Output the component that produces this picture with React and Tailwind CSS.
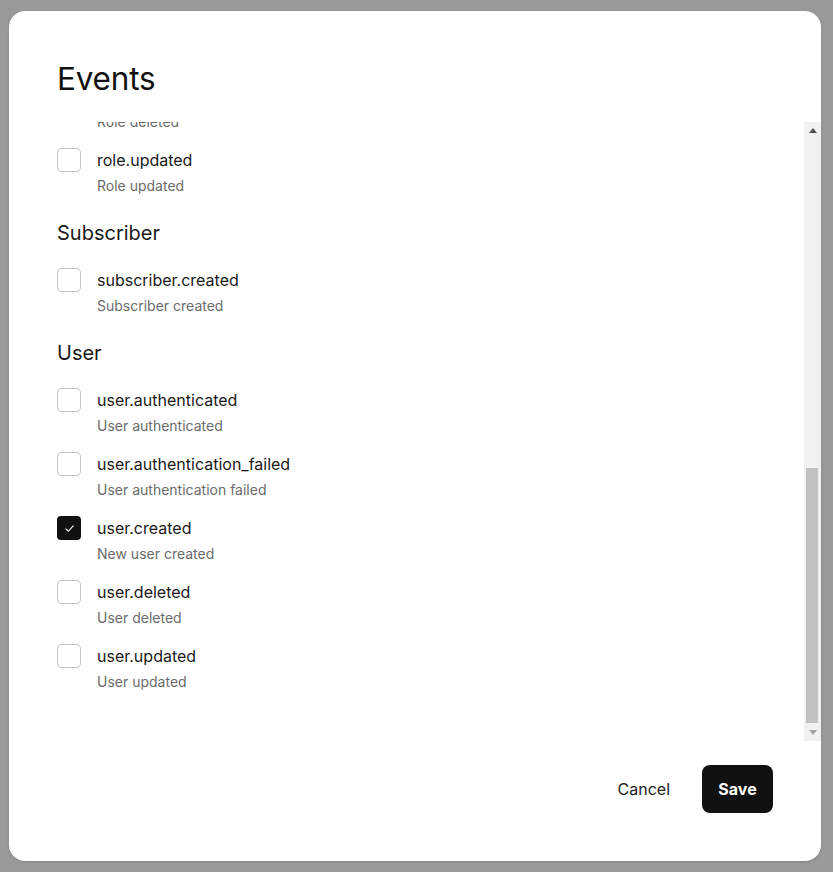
import { useLayoutEffect, useRef } from "react"

const groups = [
    {
        title: "Organization",
        events: [
            ["organization.created", "Organization created"],
            ["organization.deleted", "Organization deleted"],
            ["organization.member_added", "Member added"],
            ["organization.updated", "Organization updated"],
        ],
    },
    {
        title: "Permission",
        events: [
            ["permission.assigned", "Permission assigned"],
            ["permission.created", "Permission created"],
            ["permission.deleted", "Permission deleted"],
            ["permission.updated", "Permission updated"],
        ],
    },
    {
        title: "Role",
        events: [
            ["role.created", "Role created"],
            ["role.deleted", "Role deleted"],
            ["role.updated", "Role updated"],
        ],
    },
    {
        title: "Subscriber",
        events: [["subscriber.created", "Subscriber created"]],
    },
    {
        title: "User",
        events: [
            ["user.authenticated", "User authenticated"],
            ["user.authentication_failed", "User authentication failed"],
            ["user.created", "New user created"],
            ["user.deleted", "User deleted"],
            ["user.updated", "User updated"],
        ],
    },
]

const checked = ["user.created"]

function Checkbox({ on }) {
    if (on) {
        return (
            <span className="w-6 h-6 shrink-0 rounded-[4px] bg-[#111] flex items-center justify-center">
                <svg width="11" height="11" viewBox="0 0 12 12" fill="none">
                    <path d="M2 6.3 4.8 9 10 3.2" stroke="#fff" strokeWidth="1.2" strokeLinecap="round" strokeLinejoin="round" />
                </svg>
            </span>
        )
    }
    return <span className="w-6 h-6 shrink-0 rounded-[4px] border border-[#c4c4c4] bg-white" />
}

function Scrollbar() {
    return (
        <div className="w-[17px] shrink-0 bg-[#f1f1f1] flex flex-col">
            <div className="h-[17px] flex items-center justify-center pl-[1px]">
                <svg width="8" height="5" viewBox="0 0 8 5">
                    <path d="M4 0 8 5H0Z" fill="#505050" />
                </svg>
            </div>
            <div className="flex-1 flex flex-col justify-end pl-[2px] pr-[3px] pb-[1px]">
                <div className="h-[255px] bg-[#c1c1c1]" />
            </div>
            <div className="h-[17px] flex items-center justify-center pl-[1px]">
                <svg width="8" height="5" viewBox="0 0 8 5">
                    <path d="M0 0H8L4 5Z" fill="#a3a3a3" />
                </svg>
            </div>
        </div>
    )
}

export default function App() {
    const scroller = useRef(null)

    useLayoutEffect(() => {
        const el = scroller.current
        if (el) el.scrollTop = el.scrollHeight
    }, [])

    return (
        <div className="w-[833px] h-[872px] bg-[#999999] pt-[11px] pl-[9px] font-['Inter',sans-serif] text-[#111]">
            <div className="w-[812px] h-[850px] bg-white rounded-2xl flex flex-col overflow-hidden shadow-sm">
                {/* Header */}
                <div className="px-12 pt-[50px] pb-[25px]">
                    <h2 className="text-[31.5px] leading-9 font-normal tracking-[-0.2px]">Events</h2>
                </div>

                {/* Event list */}
                <div className="h-[619px] flex">
                    <div ref={scroller} className="flex-1 overflow-hidden pl-12 pt-[36px] pb-[49px]">
                        <div className="space-y-[23px]">
                            {groups.map(group => (
                                <div key={group.title}>
                                    <h3 className="text-[20px] leading-7 mb-[21px] text-[#1a1a1a]">{group.title}</h3>
                                    <div className="space-y-4">
                                        {group.events.map(([name, desc]) => (
                                            <div key={name} className="flex gap-4">
                                                <Checkbox on={checked.includes(name)} />
                                                <div>
                                                    <div className="text-[16px] leading-6 text-[#1a1a1a]">{name}</div>
                                                    <div className="text-[14px] leading-5 mt-1 text-[#6b6b6b]">{desc}</div>
                                                </div>
                                            </div>
                                        ))}
                                    </div>
                                </div>
                            ))}
                        </div>
                    </div>
                    <Scrollbar />
                </div>

                {/* Footer */}
                <div className="flex justify-end items-center gap-4 px-12 pt-6 pb-12">
                    <button className="h-12 px-4 text-[16px] text-[#222] rounded-lg">Cancel</button>
                    <button className="h-12 px-4 w-[71px] text-[16px] font-bold text-white bg-[#111] rounded-lg">Save</button>
                </div>
            </div>
        </div>
    )
}
